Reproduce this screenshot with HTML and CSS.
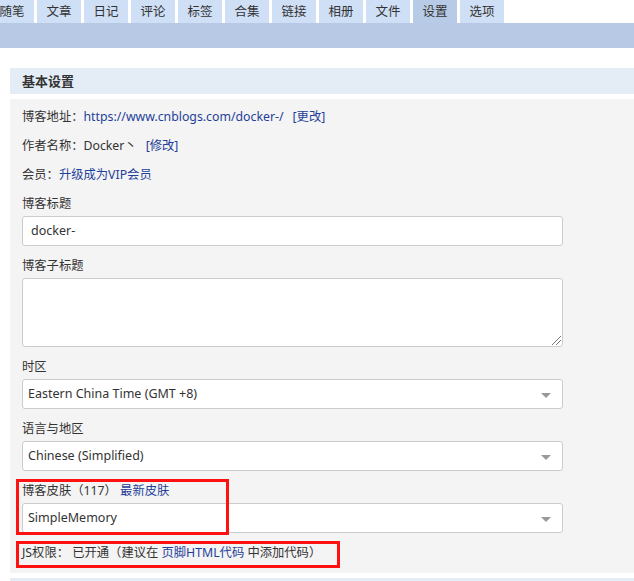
FILE: index.html
```html
<!DOCTYPE html>
<html lang="zh-CN">
<head>
<meta charset="utf-8">
<title>设置</title>
<link rel="stylesheet" href="styles.css">
</head>
<body>
<nav class="tabs">
  <a class="tab">随笔</a>
  <a class="tab">文章</a>
  <a class="tab">日记</a>
  <a class="tab">评论</a>
  <a class="tab">标签</a>
  <a class="tab">合集</a>
  <a class="tab">链接</a>
  <a class="tab">相册</a>
  <a class="tab">文件</a>
  <a class="tab active">设置</a>
  <a class="tab">选项</a>
</nav>
<div class="bar"></div>
<section class="section">
  <h2 class="section-title">基本设置</h2>
  <div class="panel">
    <div class="row">博客地址：<a class="link">https://www.cnblogs.com/docker-/</a><a class="link edit">[更改]</a></div>
    <div class="row">作者名称：Docker丶<a class="link edit wide">[修改]</a></div>
    <div class="row">会员：<a class="link">升级成为VIP会员</a></div>
    <div class="group">
      <label class="label">博客标题</label>
      <div class="control input">docker-</div>
    </div>
    <div class="group">
      <label class="label">博客子标题</label>
      <div class="control textarea"><span class="grip"></span></div>
    </div>
    <div class="group">
      <label class="label">时区</label>
      <div class="control select">Eastern China Time (GMT +8)<span class="caret"></span></div>
    </div>
    <div class="group">
      <label class="label">语言与地区</label>
      <div class="control select">Chinese (Simplified)<span class="caret"></span></div>
    </div>
    <div class="group">
      <label class="label">博客皮肤（117） <a class="link">最新皮肤</a></label>
      <div class="control select">SimpleMemory<span class="caret"></span></div>
    </div>
    <div class="row js">JS权限： 已开通（建议在 <a class="link">页脚HTML代码</a> 中添加代码）</div>
    <div class="mark mark-skin"></div>
    <div class="mark mark-js"></div>
  </div>
</section>
<div class="next-header"></div>
</body>
</html>
```
FILE: styles.css
```css
html, body {
  margin: 0;
  padding: 0;
  background: #ffffff;
  overflow: hidden;
}
body {
  font-family: "Noto Sans", "Noto Sans CJK SC", sans-serif;
  font-size: 12.3px;
  color: #333333;
}
.tabs {
  display: flex;
  gap: 3px;
  margin-left: -10px;
  height: 23px;
}
.tab {
  flex: 0 0 44px;
  height: 23px;
  line-height: 23px;
  text-align: center;
  background: #cfdff6;
  color: #333333;
  font-size: 12.5px;
}
.tab.active {
  background: #b8cbe6;
}
.bar {
  height: 25px;
  background: #b7c9e5;
}
.section {
  margin: 20px 0 0 10px;
}
.section-title {
  margin: 0;
  height: 26px;
  line-height: 26px;
  padding-left: 12px;
  font-size: 13px;
  font-weight: bold;
  background: #e4ecf6;
  color: #333333;
}
.panel {
  position: relative;
  margin-top: 5px;
  background: #f4f4f4;
  padding: 8px 12px 10px 12px;
}
.row {
  line-height: 20px;
  margin-bottom: 9px;
  white-space: nowrap;
}
.row.js {
  margin-bottom: 0;
}
.link {
  color: #1f3f99;
}
.edit {
  margin-left: 9px;
}
.edit.wide {
  margin-left: 9px;
}
.group {
  margin-bottom: 10px;
}
.label {
  display: block;
  line-height: 20px;
  margin-bottom: 2px;
}
.control {
  box-sizing: border-box;
  width: 541px;
  height: 30px;
  line-height: 28px;
  background: #ffffff;
  border: 1px solid #cccccc;
  border-radius: 3px;
  font-size: 12.5px;
  color: #333333;
  position: relative;
}
.input {
  padding-left: 8px;
}
.select {
  padding-left: 5px;
}
.textarea {
  height: 69px;
}
.grip {
  position: absolute;
  right: 1px;
  bottom: 1px;
  width: 9px;
  height: 9px;
  background: linear-gradient(135deg, transparent 0 45%, #777 45% 52%, transparent 52% 70%, #777 70% 77%, transparent 77%);
}
.caret {
  position: absolute;
  right: 11px;
  top: 13px;
  width: 0;
  height: 0;
  border-left: 5px solid transparent;
  border-right: 5px solid transparent;
  border-top: 5px solid #999999;
}
.mark {
  position: absolute;
  border: 3px solid #ff1111;
  box-sizing: border-box;
}
.mark-skin {
  left: 6px;
  top: 380px;
  width: 213px;
  height: 56px;
}
.mark-js {
  left: 6px;
  top: 442px;
  width: 324px;
  height: 27px;
}
.next-header {
  margin: 5px 0 0 10px;
  height: 20px;
  background: #e4ecf6;
}
```
